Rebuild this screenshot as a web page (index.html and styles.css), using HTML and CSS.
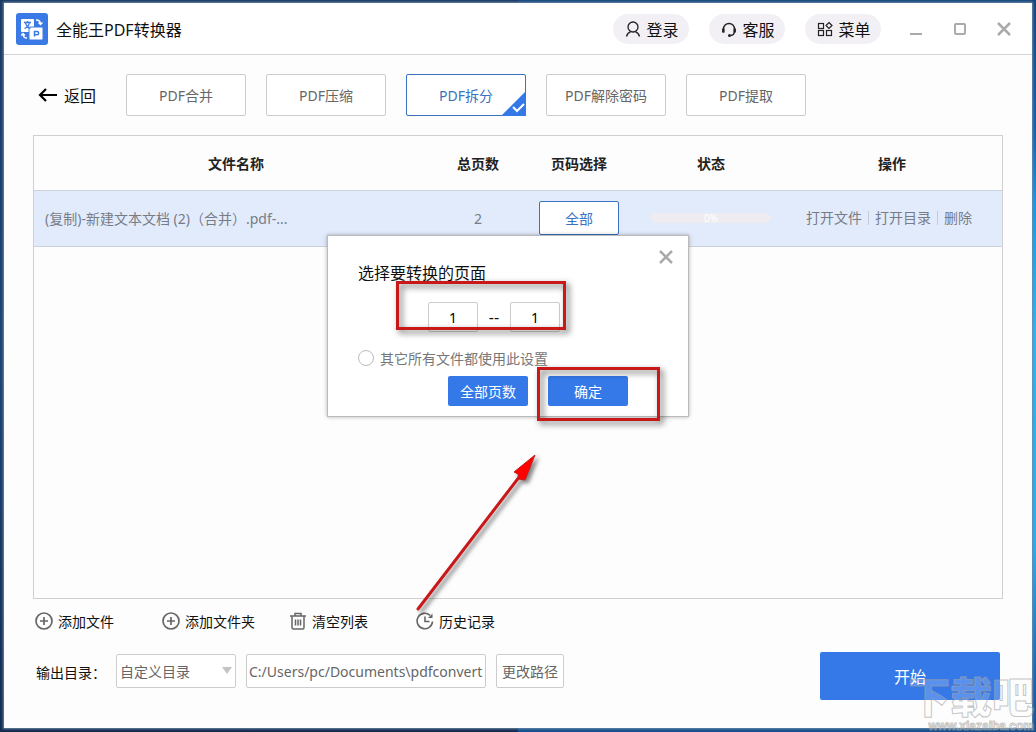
FILE: index.html
```html
<!DOCTYPE html>
<html lang="zh-CN">
<head>
    <meta charset="UTF-8">
    <meta name="viewport" content="width=device-width, initial-scale=1.0">
    <title>全能王PDF转换器</title>
    <link rel="stylesheet" href="styles.css">
</head>
<body>
    <div class="window">
        <header class="header">
            <svg class="logo" viewBox="0 0 32 32" width="32" height="32">
                <rect width="32" height="32" rx="3" fill="#3a7ae6"/>
                <rect x="5" y="6" width="13" height="13" rx="1" fill="#fff"/>
                <rect x="13" y="14" width="14" height="13" rx="1" fill="#fff" stroke="#3a7ae6"/>
                <path d="M8 9.500h7M11.500 8v1.500M9.500 9.500c.5 3 2.500 5 5 6M13.500 9.500c-.5 3-2.500 5-5 6" fill="none" stroke="#3a7ae6" stroke-width="1.300"/>
                <path d="M18.500 23.500v-5h2.500a1.600 1.600 0 0 1 0 3.300h-2" fill="none" stroke="#3a7ae6" stroke-width="1.500"/>
                <path d="M20 7c3 0 4.500 1.500 4.500 4M22.500 9.500l2 2 2-2M11 25c-2.500 0-4-1.500-4-4M5.200 22.500l1.800-2 2 2" fill="none" stroke="#fff" stroke-width="1.300"/>
            </svg>
            <h1>全能王PDF转换器</h1>
            <div class="header-links">
                <button type="button" class="pill">
                    <svg viewBox="0 0 16 16" width="16" height="16" fill="none" stroke="#222" stroke-width="1.300">
                        <circle cx="8" cy="6" r="5"/>
                        <path d="M1.500 15.500c.6-2.500 2-4 4.200-4.900M14.500 15.500c-.6-2.500-2-4-4.200-4.900"/>
                    </svg>
                    登录
                </button>
                <button type="button" class="pill">
                    <svg viewBox="0 0 16 16" width="16" height="16" fill="none" stroke="#222" stroke-width="1.400">
                        <path d="M2.500 11.500V8a5.500 5.500 0 0 1 11 0v2c0 2.500-1.500 4.300-4 4.500"/>
                        <path d="M2.300 7.500v4M13.700 7.500v4" stroke-width="2.400"/>
                        <circle cx="8.500" cy="14.500" r=".8"/>
                    </svg>
                    客服
                </button>
                <button type="button" class="pill">
                    <svg viewBox="0 0 16 16" width="16" height="16" fill="none" stroke="#222" stroke-width="1.200">
                        <rect x="1.500" y="2.500" width="5" height="5"/>
                        <rect x="1.500" y="9.500" width="5" height="5"/>
                        <rect x="9.500" y="9.500" width="5" height="5"/>
                        <path d="M12 1.500l3 3-3 3-3-3z"/>
                    </svg>
                    菜单
                </button>
            </div>
            <div class="window-buttons">
                <button type="button" aria-label="最小化">
                    <svg viewBox="0 0 16 16" width="16" height="16"><path d="M2 13h12" stroke="#aaa" stroke-width="2"/></svg>
                </button>
                <button type="button" aria-label="最大化">
                    <svg viewBox="0 0 16 16" width="16" height="16"><rect x="3" y="3" width="10" height="10" rx="1" fill="none" stroke="#aaa" stroke-width="2"/></svg>
                </button>
                <button type="button" aria-label="关闭">
                    <svg viewBox="0 0 16 16" width="16" height="16"><path d="M2 2l12 12M14 2L2 14" stroke="#aaa" stroke-width="2.500"/></svg>
                </button>
            </div>
        </header>

        <main class="content">
            <nav class="tabs">
                <a href="#" class="back">
                    <svg viewBox="0 0 20 16" width="20" height="16" fill="none" stroke="#000" stroke-width="2.200"><path d="M19 8H2M8 2L2 8l6 6"/></svg>
                    返回
                </a>
                <button type="button" class="tab">PDF合并</button>
                <button type="button" class="tab">PDF压缩</button>
                <button type="button" class="tab active">
                    PDF拆分
                    <svg class="corner" viewBox="0 0 25 25" width="25" height="25">
                        <path d="M25 0v25H0z" fill="#3578e8"/>
                        <path d="M12 16l4 4 7-7" fill="none" stroke="#fff" stroke-width="2"/>
                    </svg>
                </button>
                <button type="button" class="tab">PDF解除密码</button>
                <button type="button" class="tab">PDF提取</button>
            </nav>

            <div class="file-list">
                <table>
                    <thead>
                        <tr>
                            <th>文件名称</th>
                            <th class="col-pages">总页数</th>
                            <th class="col-select">页码选择</th>
                            <th class="col-status">状态</th>
                            <th class="col-actions">操作</th>
                        </tr>
                    </thead>
                    <tbody>
                        <tr>
                            <td class="file-name">(复制)-新建文本文档 (2)（合并）.pdf-...</td>
                            <td>2</td>
                            <td><button type="button" class="page-btn">全部</button></td>
                            <td><div class="progress">0%</div></td>
                            <td>
                                <div class="actions">
                                    <a href="#">打开文件</a>
                                    <a href="#">打开目录</a>
                                    <a href="#">删除</a>
                                </div>
                            </td>
                        </tr>
                    </tbody>
                </table>
            </div>

            <div class="toolbar">
                <button type="button">
                    <svg viewBox="0 0 18 18" width="18" height="18" fill="none" stroke="#666" stroke-width="1.700"><circle cx="9" cy="9" r="8"/><path d="M9 5v8M5 9h8"/></svg>
                    添加文件
                </button>
                <button type="button">
                    <svg viewBox="0 0 18 18" width="18" height="18" fill="none" stroke="#666" stroke-width="1.700"><circle cx="9" cy="9" r="8"/><path d="M9 5v8M5 9h8"/></svg>
                    添加文件夹
                </button>
                <button type="button">
                    <svg viewBox="0 0 18 18" width="18" height="18" fill="none" stroke="#666" stroke-width="1.500"><path d="M1 4h16M6 4V1.500h6V4M3 4v11.500q0 1.500 1.500 1.500h9q1.500 0 1.500-1.500V4M6.500 7.500v6M9 7.500v6M11.500 7.500v6"/></svg>
                    清空列表
                </button>
                <button type="button">
                    <svg viewBox="0 0 18 18" width="18" height="18" fill="none" stroke="#666" stroke-width="1.600"><path d="M16.500 9.500A7.700 7.700 0 1 1 14 3.300M9 4.500V9.500h4.500"/><path d="M16.500 1.500v4.500h-4.500z" fill="#666" stroke="none"/></svg>
                    历史记录
                </button>
            </div>

            <div class="output">
                <label for="outputType">输出目录：</label>
                <div class="select-box">
                    <select id="outputType">
                        <option>自定义目录</option>
                    </select>
                </div>
                <input type="text" class="path" aria-label="输出路径" value="C:/Users/pc/Documents\pdfconvert">
                <button type="button" class="change-btn">更改路径</button>
                <button type="button" class="start-btn">开始</button>
            </div>
        </main>

        <form class="dialog" role="dialog" aria-labelledby="dialogTitle">
            <button type="button" class="dialog-close" aria-label="关闭">
                <svg viewBox="0 0 16 16" width="16" height="16"><path d="M2 2l12 12M14 2L2 14" stroke="#aaa" stroke-width="2.500"/></svg>
            </button>
            <h2 id="dialogTitle">选择要转换的页面</h2>
            <div class="range">
                <input type="text" aria-label="起始页" value="1">
                <span>--</span>
                <input type="text" aria-label="结束页" value="1">
            </div>
            <label class="apply-all"><input type="radio" name="applyAll">其它所有文件都使用此设置</label>
            <div class="dialog-buttons">
                <button type="button">全部页数</button>
                <button type="button">确定</button>
            </div>
        </form>
    </div>

    <!-- step markers -->
    <div class="marker marker-range"></div>
    <div class="marker marker-confirm"></div>
    <svg class="arrow" viewBox="0 0 130 166" width="130" height="166">
        <path d="M4 159L109 22" stroke="#c81818" stroke-width="3" stroke-linecap="round"/>
        <path d="M121 5L100 22l4 2 1 5 6 1z" fill="#f00" stroke="#c81818" stroke-width="1"/>
    </svg>

    <div class="watermark">
        <span class="watermark-name">下载吧</span>
        <span class="watermark-url">www.xiazaiba.com</span>
    </div>
</body>
</html>
```
FILE: styles.css
```css
* {
    box-sizing: border-box;
}

body {
    margin: 0;
    padding: 3px 4px 4px;
    min-height: 100vh;
    display: flex;
    position: relative;
    overflow: hidden;
    font-family: "Noto Sans", "Noto Sans CJK SC", sans-serif;
    font-size: 14px;
    color: #111;
    /* desktop behind the window */
    background:
        linear-gradient(#17467c, #1560b0 18%, #1898e8 28%, #30b4f4 45%, #2cacf0 75%, #1a66b4 92%, #16508c) right / 50% 100% no-repeat,
        linear-gradient(#1c3a64, #1c4474 50%, #162c50) left / 50% 100% no-repeat;
}

button,
input,
select {
    font-family: inherit;
    font-size: 14px;
    margin: 0;
    padding: 0;
    outline: none;
}

button {
    border: none;
    background: none;
    color: inherit;
    cursor: pointer;
}

a {
    color: inherit;
    text-decoration: none;
}

svg {
    display: block;
    flex: none;
}

.window {
    flex: 1;
    display: flex;
    flex-direction: column;
    position: relative;
    background-color: #fdfdfd;
    box-shadow: 0 0 2px 1px #6b8aaa;
}

/* Header */
.header {
    display: flex;
    align-items: center;
    height: 52px;
    padding: 0 20px 0 12px;
    border-bottom: 1px solid #d3d3d3;
    background-color: #fff;
}

.header h1 {
    margin: 0 0 0 8px;
    font-size: 16px;
    font-weight: normal;
}

.header-links {
    display: flex;
    gap: 20px;
    margin-left: auto;
}

.pill {
    display: flex;
    align-items: center;
    justify-content: center;
    gap: 5px;
    width: 76px;
    height: 30px;
    padding-left: 2px;
    border-radius: 15px;
    background-color: #f2f0f4;
    font-size: 16px;
}

.window-buttons {
    display: flex;
    gap: 28px;
    margin-left: 27px;
}

/* Main area */
.content {
    flex: 1;
    display: flex;
    flex-direction: column;
    padding: 19px 29px 28px;
}

.tabs {
    display: flex;
    gap: 20px;
}

.back {
    display: flex;
    align-items: center;
    gap: 6px;
    width: 73px;
    padding-left: 5px;
    font-size: 16px;
    white-space: nowrap;
}

.tab {
    position: relative;
    width: 120px;
    height: 42px;
    border: 1px solid #ccc;
    border-radius: 2px;
    background-color: #fff;
    color: #666;
}

.tab.active {
    border-color: #3a72c0;
    color: #3a72c0;
}

.corner {
    position: absolute;
    right: -1px;
    bottom: -1px;
}

.file-list {
    flex: 1;
    margin-top: 19px;
    border: 1px solid #d0d0d0;
}

table {
    width: 100%;
    table-layout: fixed;
    border-collapse: collapse;
    text-align: center;
}

th,
td {
    height: 56px;
    padding: 0;
    border-bottom: 1px solid #ccd2dc;
}

th {
    height: 54px;
    color: #222;
}

td {
    background-color: #e2ebfc;
    color: #777c86;
}

.col-pages {
    width: 80px;
}

.col-select {
    width: 122px;
}

.col-status {
    width: 142px;
}

.col-actions {
    width: 220px;
}

.file-name {
    padding-left: 11px;
    text-align: left;
}

.page-btn {
    width: 80px;
    height: 34px;
    border: 1px solid #3a72c0;
    border-radius: 2px;
    background-color: #fff;
    color: #3a72c0;
}

.progress {
    width: 120px;
    height: 10px;
    margin: 0 auto;
    border-radius: 5px;
    background-color: #eeecf0;
    color: #fff;
    font-size: 10px;
    line-height: 10px;
}

.actions {
    display: flex;
    justify-content: center;
    padding-right: 6px;
    line-height: 14px;
}

.actions a {
    padding: 0 6px;
}

.actions a + a {
    border-left: 1px solid #c4cad6;
}

/* Bottom bars */
.toolbar {
    display: flex;
    padding: 11px 0 21px 2px;
}

.toolbar button {
    display: flex;
    align-items: center;
    gap: 5px;
    width: 127px;
    height: 21px;
}

.output {
    display: flex;
    align-items: flex-start;
    height: 48px;
    padding: 0 3px;
}

.output label {
    width: 80px;
    line-height: 42px;
}

.output select,
.output .path,
.change-btn {
    height: 34px;
    margin-top: 2px;
    border: 1px solid #ccc;
    border-radius: 2px;
    background-color: #fff;
    color: #666;
}

.select-box {
    position: relative;
}

.output select {
    appearance: none;
    display: block;
    width: 120px;
    padding-left: 3px;
}

.select-box::after {
    content: "";
    position: absolute;
    right: 4px;
    top: 15px;
    border: 5px solid transparent;
    border-top: 7px solid #c4c4c4;
    border-bottom: none;
    pointer-events: none;
}

.output .path {
    width: 240px;
    margin-left: 10px;
    padding-left: 2px;
}

.change-btn {
    width: 68px;
    margin-left: 10px;
}

.start-btn {
    width: 180px;
    height: 48px;
    margin-left: auto;
    border-radius: 2px;
    background-color: #3578e8;
    color: #fff;
    font-size: 16px;
}

/* Page range dialog */
.dialog {
    position: absolute;
    left: 323px;
    top: 232px;
    width: 362px;
    padding: 26px 30px 10px;
    border: 1px solid #bbb;
    background-color: #fff;
    box-shadow: 0 0 4px rgba(0, 0, 0, 0.3);
}

.dialog h2 {
    margin: 0 0 18px;
    font-size: 16px;
    font-weight: normal;
    line-height: 22px;
}

.dialog-close {
    position: absolute;
    top: 13px;
    right: 14px;
}

.range {
    display: flex;
    align-items: center;
    padding-left: 70px;
}

.range input {
    width: 50px;
    height: 30px;
    border: 1px solid #ccc;
    border-radius: 2px;
    text-align: center;
}

.range span {
    width: 32px;
    font-size: 16px;
    text-align: center;
}

.apply-all {
    display: flex;
    align-items: center;
    gap: 6px;
    height: 20px;
    margin: 16px 0 8px;
    color: #777;
}

.apply-all input {
    appearance: none;
    width: 16px;
    height: 16px;
    border: 1px solid #bbb;
    border-radius: 50%;
}

.dialog-buttons {
    display: flex;
    gap: 20px;
    padding-left: 90px;
}

.dialog-buttons button {
    width: 80px;
    height: 30px;
    border-radius: 2px;
    background-color: #3578e8;
    color: #fff;
}

/* Step markers */
.marker {
    position: absolute;
    border: 3px solid #c81818;
    filter: drop-shadow(3px 3px 3px rgba(0, 0, 0, 0.6));
    pointer-events: none;
}

.marker-range {
    left: 396px;
    top: 281px;
    width: 170px;
    height: 49px;
}

.marker-confirm {
    left: 537px;
    top: 367px;
    width: 123px;
    height: 54px;
}

.arrow {
    position: absolute;
    left: 414px;
    top: 450px;
    filter: drop-shadow(3px 3px 2px rgba(0, 0, 0, 0.5));
    pointer-events: none;
}

.watermark {
    position: absolute;
    right: 2px;
    bottom: 0;
    display: flex;
    flex-direction: column;
    align-items: flex-end;
    color: rgba(255, 255, 255, 0.2);
    font-weight: 900;
    -webkit-text-stroke: 1px rgba(160, 160, 160, 0.6);
    pointer-events: none;
}

.watermark-name {
    font-size: 42px;
    line-height: 46px;
}

.watermark-url {
    font-family: "Liberation Sans", sans-serif;
    font-size: 12px;
    line-height: 12px;
}
```
